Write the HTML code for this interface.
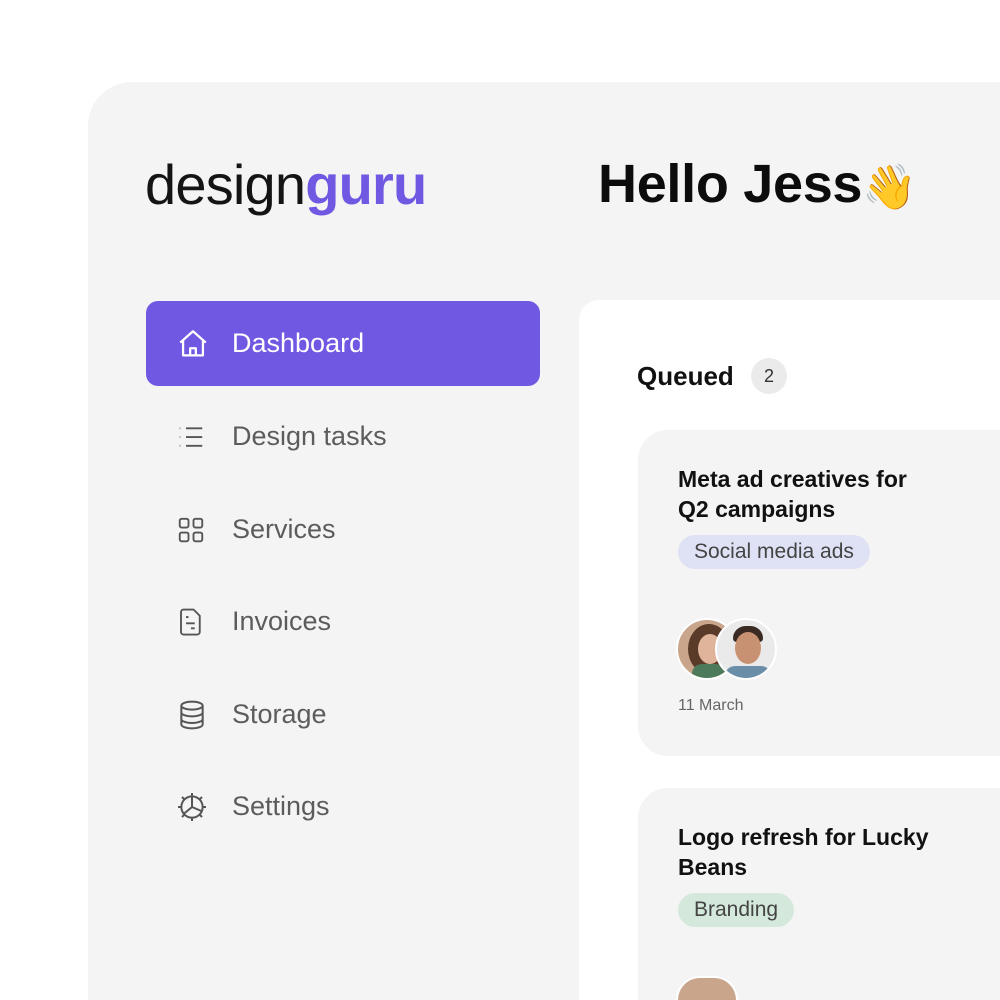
<!DOCTYPE html>
<html style="height:1000px;overflow:hidden"><head><style>
*{margin:0;padding:0;box-sizing:border-box}
body{width:1000px;height:1000px;background:#fff;position:relative;overflow:hidden;font-family:"Liberation Sans",sans-serif}
.panel{position:absolute;left:88px;top:82px;width:912px;height:918px;background:#f4f4f4;border-radius:44px 0 0 0}
.logo{position:absolute;left:145px;top:152px;font-size:56px;letter-spacing:-0.8px;color:#141414}
.logo b{color:#7158e2;font-weight:bold}
.hello{position:absolute;left:598px;top:153px;font-size:54px;font-weight:bold;color:#0c0c0c;letter-spacing:-0.3px;white-space:nowrap}
.nav{position:absolute;left:146px;width:394px;height:85px;display:flex;align-items:center;font-size:27px;color:#5c5c5c}
.nav svg{position:absolute;left:30px}
.nav span{position:absolute;left:86px}
.active{background:#7158e2;border-radius:12px;color:#fff}
.content{position:absolute;left:579px;top:300px;width:421px;height:700px;background:#fff;border-radius:20px 0 0 0}
.q{position:absolute;left:637px;top:361px;font-size:26px;font-weight:bold;color:#111}
.cnt{position:absolute;left:751px;top:358px;width:36px;height:36px;border-radius:50%;background:#ebebeb;font-size:18px;text-align:center;line-height:36px;color:#333}
.card{position:absolute;left:638px;width:362px;background:#f4f4f4;border-radius:30px 0 0 30px;overflow:hidden}
.card h3{position:absolute;left:40px;top:34px;font-size:23px;line-height:30px;color:#111;width:262px}
.tag{position:absolute;left:40px;height:34px;border-radius:17px;padding:0 16px;font-size:21px;line-height:34px;color:#444}
.av{position:absolute;width:62px;height:62px;border-radius:50%;border:2px solid #fff;overflow:hidden}
</style></head><body>
<div class="panel"></div>
<div class="logo">design<b>guru</b></div>
<div class="hello">Hello Jess<span style="font-size:44px">👋</span></div>

<div class="nav active" style="top:301px"><svg width="34" height="34" viewBox="0 0 24 24" fill="none" stroke="#fff" stroke-width="1.6" stroke-linejoin="round"><path d="M3 11L12 3l9 8M5 9.5V20h14V9.5M10 20v-5h4v5"/></svg><span>Dashboard</span></div>
<div class="nav" style="top:394px"><svg width="30" height="30" viewBox="0 0 24 24" fill="none" stroke="#555" stroke-width="1.5"><path d="M8 5h13M8 12h13M8 19h13"/><path d="M3 5h.5M3 12h.5M3 19h.5"/></svg><span>Design tasks</span></div>
<div class="nav" style="top:487px"><svg width="30" height="30" viewBox="0 0 24 24" fill="none" stroke="#555" stroke-width="1.5"><rect x="3" y="3" width="7" height="7" rx="1.5"/><rect x="14" y="3" width="7" height="7" rx="1.5"/><rect x="3" y="14" width="7" height="7" rx="1.5"/><rect x="14" y="14" width="7" height="7" rx="1.5"/></svg><span>Services</span></div>
<div class="nav" style="top:579px"><svg width="30" height="30" viewBox="0 0 24 24" fill="none" stroke="#555" stroke-width="1.5" stroke-linejoin="round"><path d="M6 2h8l5 5v13a2 2 0 0 1-2 2H6a2 2 0 0 1-2-2V4a2 2 0 0 1 2-2z"/><path d="M8 8h2M8 13h7M12 17h3"/></svg><span>Invoices</span></div>
<div class="nav" style="top:672px"><svg width="32" height="32" viewBox="0 0 24 24" fill="none" stroke="#555" stroke-width="1.5"><ellipse cx="12" cy="5" rx="8" ry="3"/><path d="M4 5v14c0 1.7 3.6 3 8 3s8-1.3 8-3V5M4 10c0 1.7 3.6 3 8 3s8-1.3 8-3M4 15c0 1.7 3.6 3 8 3s8-1.3 8-3"/></svg><span>Storage</span></div>
<div class="nav" style="top:764px"><svg width="32" height="32" viewBox="0 0 24 24" fill="none" stroke="#555" stroke-width="1.5"><circle cx="12" cy="12" r="8"/><path d="M12 4v8l7 3M12 12l-6 5M12 1.5v2M12 20.5v2M1.5 12h2M20.5 12h2M4.5 4.5l1.5 1.5M18 18l1.5 1.5M4.5 19.5L6 18M18 6l1.5-1.5"/></svg><span>Settings</span></div>

<div class="content"></div>
<div class="q">Queued</div><div class="cnt">2</div>

<div class="card" style="top:430px;height:326px">
<h3>Meta ad creatives for Q2 campaigns</h3>
<div class="tag" style="top:105px;background:#dfe2f4">Social media ads</div>
<div class="av" style="left:38px;top:188px;background:#c9a58c"><div style="position:absolute;left:10px;top:4px;width:42px;height:50px;border-radius:50%;background:#5a3a28"></div><div style="position:absolute;left:20px;top:14px;width:24px;height:30px;border-radius:50%;background:#e0b49a"></div><div style="position:absolute;left:14px;top:44px;width:34px;height:20px;background:#4c7a5a;border-radius:10px"></div></div>
<div class="av" style="left:77px;top:188px;background:#eaeaea"><div style="position:absolute;left:16px;top:6px;width:30px;height:16px;border-radius:14px 14px 4px 4px;background:#3a2a22"></div><div style="position:absolute;left:18px;top:12px;width:26px;height:32px;border-radius:50%;background:#c89272"></div><div style="position:absolute;left:8px;top:46px;width:46px;height:20px;background:#6a8ea8;border-radius:12px"></div></div>
<div style="position:absolute;left:40px;top:267px;font-size:16px;color:#666">11 March</div>
</div>

<div class="card" style="top:788px;height:212px;border-radius:30px 0 0 0">
<h3>Logo refresh for Lucky Beans</h3>
<div class="tag" style="top:105px;background:#d4e8db">Branding</div>
<div class="av" style="left:38px;top:188px;height:24px;border-radius:31px 31px 0 0;border-bottom:none;background:#c9a58c"></div>
</div>
</body></html>
